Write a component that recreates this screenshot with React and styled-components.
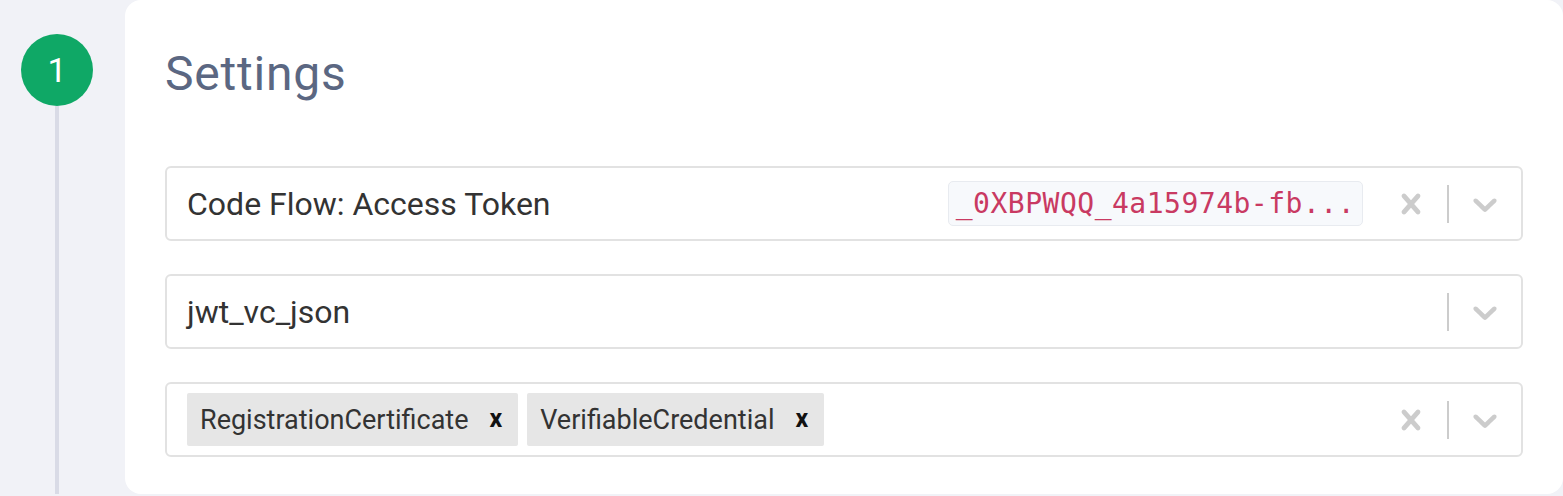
import React from "react";
import styled, { createGlobalStyle } from "styled-components";

const Global = createGlobalStyle`
  html, body { margin: 0; padding: 0; }
  body {
    background: #f1f2f7;
    font-family: Roboto, "Noto Sans", Arial, sans-serif;
    overflow: hidden;
  }
`;

const Page = styled.div`
  display: flex;
  width: 1563px;
  height: 496px;
  box-sizing: border-box;
  padding-bottom: 2px;
`;

const Rail = styled.div`
  width: 125px;
  flex: none;
  display: flex;
  flex-direction: column;
  align-items: flex-start;
  padding-left: 21px;
  padding-top: 34px;
  box-sizing: border-box;
`;

const StepBadge = styled.div`
  width: 72px;
  height: 72px;
  border-radius: 50%;
  background: #0fa866;
  color: #fff;
  display: flex;
  align-items: center;
  justify-content: center;
  font-size: 34px;
  font-weight: 400;
`;

const RailLine = styled.div`
  width: 4px;
  margin-left: 34px;
  flex: 1;
  background: #d9dbe6;
`;

const Card = styled.div`
  flex: 1;
  background: #fff;
  border-radius: 16px;
  padding: 46px 40px 0 40px;
  box-sizing: border-box;
  display: flex;
  flex-direction: column;
`;

const Title = styled.h2`
  margin: 0 0 64px 0;
  font-size: 48px;
  line-height: 56px;
  font-weight: 400;
  color: #5b6782;
  letter-spacing: 0.8px;
`;

const Fields = styled.div`
  display: flex;
  flex-direction: column;
  gap: 33px;
`;

const Control = styled.div`
  display: flex;
  align-items: center;
  height: 75px;
  box-sizing: border-box;
  border: 2px solid #e2e2e2;
  border-radius: 6px;
  background: #fff;
`;

const ValueArea = styled.div`
  flex: 1;
  display: flex;
  align-items: center;
  gap: ${(p) => (p.$multi ? "9px" : "0")};
  padding: 0 ${(p) => (p.$multi ? "0" : "12px")} 0 20px;
  min-width: 0;
`;

const Label = styled.span`
  font-size: 32px;
  color: #333;
  flex: 1;
  white-space: nowrap;
`;

const Code = styled.code`
  font-family: "DejaVu Sans Mono", "Liberation Mono", monospace;
  font-size: 28px;
  color: #c93a62;
  background: #f7f9fc;
  border: 1px solid #e8ebf0;
  border-radius: 5px;
  height: 45px;
  box-sizing: border-box;
  padding: 0 7px;
  display: flex;
  align-items: center;
  white-space: nowrap;
  letter-spacing: 0.5px;
`;

const Chip = styled.div`
  display: flex;
  align-items: center;
  height: 53px;
  background: #e6e6e6;
  border-radius: 2px;
  padding: 0 16px 0 13px;
  gap: 21px;
`;

const ChipText = styled.span`
  font-size: 27px;
  color: #333;
`;

const ChipRemove = styled.span`
  font-size: 25px;
  font-weight: 700;
  color: #111;
  line-height: 1;
  margin-top: -2px;
`;

const Indicators = styled.div`
  display: flex;
  align-items: center;
  align-self: stretch;
`;

const Indicator = styled.div`
  padding: 16px;
  display: flex;
  color: #cccccc;
`;

const Separator = styled.span`
  width: 2px;
  height: 38px;
  background: #cccccc;
`;

const CrossIcon = () => (
  <svg width="40" height="40" viewBox="0 0 20 20" fill="currentColor">
    <path d="M14.348 14.849c-0.469 0.469-1.229 0.469-1.697 0l-2.651-3.030-2.651 3.029c-0.469 0.469-1.229 0.469-1.697 0-0.469-0.469-0.469-1.229 0-1.697l2.758-3.15-2.759-3.152c-0.469-0.469-0.469-1.228 0-1.697s1.228-0.469 1.697 0l2.652 3.031 2.651-3.031c0.469-0.469 1.228-0.469 1.697 0s0.469 1.229 0 1.697l-2.758 3.152 2.758 3.15c0.469 0.469 0.469 1.229 0 1.698z" />
  </svg>
);

const ChevronIcon = () => (
  <svg width="40" height="40" viewBox="0 0 20 20" fill="currentColor">
    <path d="M4.516 7.548c0.436-0.446 1.043-0.481 1.576 0l3.908 3.747 3.908-3.747c0.533-0.481 1.141-0.446 1.574 0 0.436 0.445 0.408 1.197 0 1.615-0.406 0.418-4.695 4.502-4.695 4.502-0.217 0.223-0.502 0.335-0.787 0.335s-0.57-0.112-0.789-0.335c0 0-4.287-4.084-4.695-4.502s-0.436-1.170 0-1.615z" />
  </svg>
);

const Select = ({ children, multi, clearable }) => (
  <Control>
    <ValueArea $multi={multi}>{children}</ValueArea>
    <Indicators>
      {clearable && (
        <Indicator>
          <CrossIcon />
        </Indicator>
      )}
      <Separator />
      <Indicator>
        <ChevronIcon />
      </Indicator>
    </Indicators>
  </Control>
);

export default function App() {
  return (
    <>
      <Global />
      <Page>
        <Rail>
          <StepBadge>1</StepBadge>
          <RailLine />
        </Rail>
        <Card>
          <Title>Settings</Title>
          <Fields>
            <Select clearable>
              <Label>Code Flow: Access Token</Label>
              <Code>_0XBPWQQ_4a15974b-fb...</Code>
            </Select>
            <Select>
              <Label>jwt_vc_json</Label>
            </Select>
            <Select multi clearable>
              {["RegistrationCertificate", "VerifiableCredential"].map((t) => (
                <Chip key={t}>
                  <ChipText>{t}</ChipText>
                  <ChipRemove>x</ChipRemove>
                </Chip>
              ))}
            </Select>
          </Fields>
        </Card>
      </Page>
    </>
  );
}
